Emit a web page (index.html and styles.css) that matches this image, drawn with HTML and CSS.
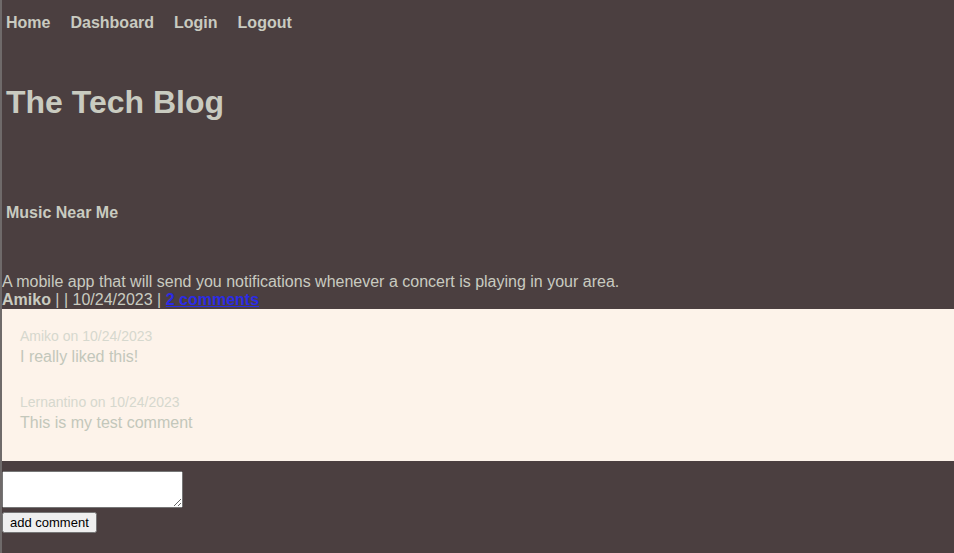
FILE: index.html
```html
<!DOCTYPE html>
<html>
<head>
<meta charset="utf-8">
<link rel="stylesheet" href="styles.css">
</head>
<body>
<nav class="nav">
  <a href="#">Home</a>
  <a href="#">Dashboard</a>
  <a href="#">Login</a>
  <a href="#">Logout</a>
</nav>
<h1 class="site-title">The Tech Blog</h1>
<main>
  <h2 class="post-title">Music Near Me</h2>
  <p class="post-body">A mobile app that will send you notifications whenever a concert is playing in your area.</p>
  <div class="post-meta"><strong>Amiko</strong> | | 10/24/2023 | <a href="#" class="comments-link">2 comments</a></div>
  <section class="comments">
    <div class="comment">
      <div class="comment-meta">Amiko on 10/24/2023</div>
      <div class="comment-text">I really liked this!</div>
    </div>
    <div class="comment">
      <div class="comment-meta">Lernantino on 10/24/2023</div>
      <div class="comment-text">This is my test comment</div>
    </div>
  </section>
  <form class="comment-form">
    <textarea class="comment-input"></textarea>
    <button type="button" class="comment-btn">add comment</button>
  </form>
</main>
</body>
</html>
```
FILE: styles.css
```css
html {
  background: #4b3f40;
}
body {
  margin: 0;
  min-height: 553px;
  border-left: 2px solid #6f6a6a;
  font-family: "Liberation Sans", Arial, sans-serif;
  color: #c9cbc0;
  font-size: 16px;
}
.nav {
  display: flex;
  gap: 20px;
  padding: 14px 4px 0;
  line-height: 18px;
}
.nav a {
  color: #c9cbc0;
  font-weight: bold;
  text-decoration: none;
}
.site-title {
  margin: 52px 0 0 4px;
  font-size: 32px;
  line-height: 37px;
}
.post-title {
  margin: 83px 0 0 4px;
  font-size: 16px;
  line-height: 18px;
}
.post-body {
  margin: 51px 0 0;
  line-height: 18px;
}
.post-meta {
  line-height: 18px;
}
.comments-link {
  color: #2b2be6;
  font-weight: bold;
}
.comments {
  background: #fdf3ea;
  padding: 19px 18px 20px;
}
.comment {
  margin-bottom: 28px;
}
.comment:last-child {
  margin-bottom: 0;
  padding-bottom: 9px;
}
.comment-meta {
  font-size: 14px;
  line-height: 16px;
  color: #d6d8ce;
}
.comment-text {
  margin-top: 4px;
  line-height: 18px;
  color: #c3c7bb;
}
.comment-form {
  display: flex;
  flex-direction: column;
  align-items: flex-start;
  padding-top: 10px;
}
.comment-input {
  width: 181px;
  height: 37px;
  box-sizing: border-box;
  margin: 0;
}
.comment-btn {
  margin-top: 4px;
  font-family: "Liberation Sans", Arial, sans-serif;
  font-size: 13px;
}
```
